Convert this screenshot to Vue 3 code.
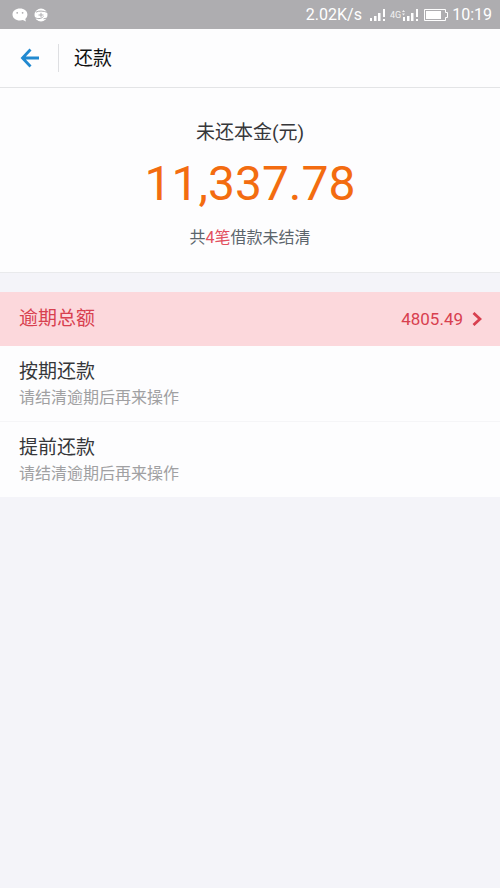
<script setup>
const total = '11,337.78'
const count = 4
const overdue = '4805.49'
const options = [
  { title: '按期还款', note: '请结清逾期后再来操作' },
  { title: '提前还款', note: '请结清逾期后再来操作' },
]
</script>

<template>
  <div class="screen">
    <div class="status">
      <div class="notices">
        <svg width="16" height="14" viewBox="0 0 16 14" aria-hidden="true">
          <path d="M8 .5C3.700.5.500 3 .5 6.500s3.200 6 7.500 6c1 0 2-.1 2.900-.4l3 1.400-.6-2.500c1.300-1.100 2.100-2.700 2.100-4.500C15.400 3 12.200.5 8 .5z" fill="#fff" />
          <circle cx="5.200" cy="4.800" r=".9" fill="#aeadb0" />
          <circle cx="10.600" cy="4.800" r=".9" fill="#aeadb0" />
        </svg>
        <svg width="14" height="14" viewBox="0 0 14 14" aria-hidden="true">
          <circle cx="7" cy="7" r="6.500" fill="#fff" />
          <path d="M2 4.200C4.500 2.600 9 2.600 14 4.600M0 9c3 2.200 7 2.200 9.500-.5M9.500 10.800l4-.8" fill="none" stroke="#aeadb0" stroke-width="1" />
          <path d="M4.500 7h5M7 4.800v4.400" fill="none" stroke="#aeadb0" stroke-width="1" />
        </svg>
      </div>
      <div class="system">
        <span class="speed">2.02K/s</span>
        <svg width="16" height="12" viewBox="0 0 16 12" fill="#fff" aria-hidden="true">
          <path d="M0 9h2v3H0zM4 7h2.500v5H4zM8 4h2.500v8H8zM13 0h2v8h-2zM13 10h2v2h-2z" />
        </svg>
        <span class="mobile">
          <span class="network">4G</span>
          <svg width="17" height="12" viewBox="0 0 17 12" fill="#fff" aria-hidden="true">
            <path d="M2 8h2v4H2zM6 7h2.500v5H6zM10 4h2.500v8H10zM15 0h2v8h-2zM15 10h2v2h-2z" />
            <path d="M1 3l1.500-2L4 3zM1 4.500h3L2.500 6.500z" opacity=".8" />
          </svg>
        </span>
        <svg width="24" height="12" viewBox="0 0 24 12" fill="#fff" aria-hidden="true">
          <path d="M.5.500h21v3h2v5h-2v3H.5z" fill="none" stroke="#fff" />
          <path d="M2 2h15v8H2z" />
        </svg>
        <time>10:19</time>
      </div>
    </div>

    <header class="bar">
      <button class="back" type="button" aria-label="返回">
        <svg width="20" height="20" viewBox="0 0 20 20" fill="none" stroke="#2189d0" stroke-width="2.800" aria-hidden="true">
          <path d="M10.500 1.500L2.500 10l8 8.500M2.500 10H19" />
        </svg>
      </button>
      <h1>还款</h1>
    </header>

    <section class="summary">
      <p class="label">未还本金(元)</p>
      <p class="total">{{ total }}</p>
      <p class="count">共<em>{{ count }}笔</em>借款未结清</p>
    </section>

    <main class="list">
      <button class="overdue" type="button">
        <span class="name">逾期总额</span>
        <span class="amount">{{ overdue }}</span>
        <svg width="10" height="14" viewBox="0 0 10 14" fill="none" stroke="#d8404f" stroke-width="2.800" aria-hidden="true">
          <path d="M1.500 1L8 7l-6.500 6" />
        </svg>
      </button>
      <button v-for="item in options" :key="item.title" class="option" type="button">
        <span class="name">{{ item.title }}</span>
        <span class="note">{{ item.note }}</span>
      </button>
    </main>
  </div>
</template>

<style>
body {
  background: #f4f4f9;
}
</style>

<style scoped>
.screen {
  font-family: Roboto, "Noto Sans CJK SC", sans-serif;
  color: #36373a;
}
h1, p {
  margin: 0;
  font-weight: 400;
}
button {
  margin: 0;
  padding: 0;
  border: 0;
  background: none;
  font: inherit;
  color: inherit;
  text-align: left;
}
svg {
  display: block;
  flex: none;
}
.status {
  display: flex;
  justify-content: space-between;
  align-items: center;
  height: 29px;
  padding: 0 8px 0 12px;
  background: #aeadb0;
  color: #fff;
  font-size: 16px;
}
.notices {
  display: flex;
  align-items: center;
  gap: 6px;
}
.system {
  display: flex;
  align-items: center;
  gap: 4px;
}
.speed {
  margin-right: 4px;
}
.mobile {
  display: flex;
  align-items: center;
  margin-right: 2px;
}
.network {
  font-size: 9px;
  opacity: 0.85;
}
.bar {
  display: flex;
  align-items: center;
  height: 58px;
  border-bottom: 1px solid #e3e4e6;
  background: #fdfdfe;
}
.back {
  padding: 4px 18px 4px 20px;
  border-right: 1px solid #dedfe2;
}
h1 {
  padding: 2px 0 0 15px;
  font-size: 19px;
  line-height: 28px;
  color: #111;
}
.summary {
  display: flex;
  flex-direction: column;
  align-items: center;
  padding: 31px 0 22px;
  border-bottom: 1px solid #e9eaec;
  background: #fdfdfe;
  text-align: center;
}
.label {
  font-size: 19px;
  line-height: 28px;
}
.total {
  padding: 8px 0;
  font-size: 48px;
  line-height: 58px;
  color: #f36c10;
}
.count {
  padding-top: 5px;
  font-size: 16px;
  line-height: 24px;
  color: #5c656c;
}
.count em {
  font-style: normal;
  color: #e2505e;
}
.list {
  display: flex;
  flex-direction: column;
  margin-top: 19px;
}
.name {
  font-size: 19px;
  line-height: 28px;
}
.overdue {
  display: flex;
  align-items: center;
  height: 54px;
  padding: 0 18px 0 19px;
  background: #fcd8dc;
  color: #d8404f;
}
.amount {
  margin-left: auto;
  padding-right: 9px;
  font-size: 17px;
}
.option {
  display: flex;
  flex-direction: column;
  padding: 12px 19px 11px;
  background: #fdfdfe;
}
.option + .option {
  border-top: 1px solid #f5f5f7;
}
.note {
  font-size: 16px;
  line-height: 24px;
  color: #a0a0a2;
}
</style>
